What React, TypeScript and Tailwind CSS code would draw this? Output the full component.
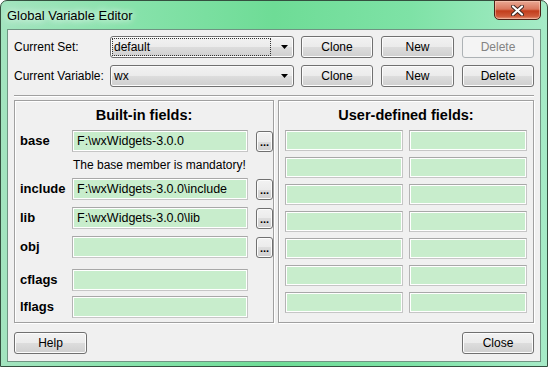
import React from 'react'

const btnFace =
  'bg-[linear-gradient(#f2f2f2,#ebebeb_50%,#dddddd_50%,#cfcfcf)] border border-[#707070] rounded-[3px] shadow-[inset_0_0_0_1px_#fcfcfc]'

function Button({ label, w, disabled }: { label: string; w: string; disabled?: boolean }) {
  return (
    <div
      className={`${w} h-[22px] flex items-center justify-center text-[12px] ${
        disabled
          ? 'bg-[#f4f4f4] border border-[#adb2b5] rounded-[3px] text-[#838383]'
          : `${btnFace} text-black`
      }`}
    >
      {label}
    </div>
  )
}

function Combo({ value, focused }: { value: string; focused?: boolean }) {
  return (
    <div className={`w-[184px] h-[22px] ${btnFace} flex items-center pl-[2px] pr-[5px]`}>
      <div
        className={`flex-1 h-[16px] flex items-center pl-[1px] text-[12px] text-black ${
          focused ? 'outline outline-1 outline-dotted outline-[#333]' : ''
        }`}
      >
        {value}
      </div>
      <svg width="7" height="4" viewBox="0 0 7 4" className="ml-[11px]">
        <path d="M0 0h7L3.5 4z" fill="#000" />
      </svg>
    </div>
  )
}

function Field({ w, value }: { w: string; value?: string }) {
  return (
    <div
      className={`${w} h-[22px] border border-[#c6c6c6] border-t-[#a8a8a8] border-l-[#b4b4b4] bg-[#c8edcc] shadow-[inset_0_0_0_1px_#ffffff] flex items-center pl-[4px] text-[12.5px] text-black whitespace-nowrap overflow-hidden`}
    >
      {value}
    </div>
  )
}

function Ellipsis() {
  return (
    <div className={`w-[17px] h-[21px] ${btnFace} flex items-end justify-center pb-[3px] text-[11px] font-bold leading-none`}>
      ...
    </div>
  )
}

const groupBox =
  'h-[223px] border border-[#a0a0a0] shadow-[inset_1px_1px_0_#ffffff,1px_1px_0_#ffffff] flex flex-col'

function BuiltinRow({ label, value, mt, browse }: { label: string; value?: string; mt: string; browse?: boolean }) {
  return (
    <div className={`flex items-center h-[22px] ${mt}`}>
      <div className="w-[57px] pl-[5px] text-[13px] font-bold text-black">{label}</div>
      <Field w="w-[176px]" value={value} />
      {browse && (
        <div className="ml-[8px]">
          <Ellipsis />
        </div>
      )}
    </div>
  )
}

export default function App() {
  return (
    <div className="w-[548px] h-[367px] overflow-hidden font-['Liberation_Sans',Arial,sans-serif] bg-white">
      <div className="w-full h-full border border-[#34503f] rounded-t-[7px] bg-[linear-gradient(90deg,#a3e4bf,#86e2aa_25%,#6edc96_50%,#7ee2a6_75%,#a6ebc7)] flex flex-col">
        {/* Title bar */}
        <div className="h-[28px] flex items-start">
          <div className="pl-[6px] pt-[5px] text-[13px] text-black [text-shadow:0_0_6px_#e8fff0,0_0_10px_#e8fff0]">
            Global Variable Editor
          </div>
          <div className="flex-1" />
          <div className="-mt-px mr-[6px] w-[47px] h-[20px] rounded-b-[5px] border border-[#4b2117] bg-[linear-gradient(#e9a894,#d9785e_45%,#c23d1c_55%,#cf5a3a_85%,#e69a7f)] shadow-[inset_0_0_0_1px_rgba(255,220,200,0.45)] flex items-center justify-center">
            <svg width="13" height="11" viewBox="0 0 13 11">
              <path d="M2 1.5l9 8M11 1.5l-9 8" stroke="#3a2420" strokeWidth="4" strokeLinecap="round" />
              <path d="M2 1.5l9 8M11 1.5l-9 8" stroke="#ffffff" strokeWidth="2.2" strokeLinecap="round" />
            </svg>
          </div>
        </div>

        {/* Client area */}
        <div className="mx-[6px] h-[333px] border border-[#6f9482] bg-[#f0f0f0] flex flex-col px-[6px] pt-[6px] text-[12px] text-black">
          <div className="flex items-center h-[22px]">
            <div className="w-[96px]">Current Set:</div>
            <Combo value="default" focused />
            <div className="ml-[7px]"><Button label="Clone" w="w-[72px]" /></div>
            <div className="ml-[8px]"><Button label="New" w="w-[73px]" /></div>
            <div className="ml-[8px]"><Button label="Delete" w="w-[72px]" disabled /></div>
          </div>
          <div className="flex items-center h-[22px] mt-[7px]">
            <div className="w-[96px]">Current Variable:</div>
            <Combo value="wx" />
            <div className="ml-[7px]"><Button label="Clone" w="w-[72px]" /></div>
            <div className="ml-[8px]"><Button label="New" w="w-[73px]" /></div>
            <div className="ml-[8px]"><Button label="Delete" w="w-[72px]" /></div>
          </div>

          <div className="mt-[8px] h-[2px] border-t border-[#a0a0a0] bg-white" />

          <div className="mt-[3px] flex gap-[4px]">
            {/* Built-in fields */}
            <div className={`${groupBox} w-[260px]`}>
              <div className="h-[29px] flex items-center justify-center text-[14.5px] font-bold pt-[1px]">
                Built-in fields:
              </div>
              <BuiltinRow label="base" value="F:\wxWidgets-3.0.0" mt="" browse />
              <div className="h-[26px] flex items-center pl-[58px] text-[12px]">The base member is mandatory!</div>
              <BuiltinRow label="include" value="F:\wxWidgets-3.0.0\include" mt="" browse />
              <BuiltinRow label="lib" value="F:\wxWidgets-3.0.0\lib" mt="mt-[7px]" browse />
              <BuiltinRow label="obj" mt="mt-[7px]" browse />
              <BuiltinRow label="cflags" mt="mt-[11px]" />
              <BuiltinRow label="lflags" mt="mt-[5px]" />
            </div>

            {/* User-defined fields */}
            <div className={`${groupBox} w-[256px]`}>
              <div className="h-[29px] flex items-center justify-center text-[14.5px] font-bold pt-[1px]">
                User-defined fields:
              </div>
              <div className="grid grid-cols-2 gap-x-[6px] gap-y-[6px] px-[6px]">
                {Array.from({ length: 14 }).map((_, i) => (
                  <div key={i} className="h-[21px] border border-[#c6c6c6] border-t-[#a8a8a8] border-l-[#b4b4b4] bg-[#c8edcc] shadow-[inset_0_0_0_1px_#ffffff]" />
                ))}
              </div>
            </div>
          </div>

          <div className="mt-[9px] flex justify-between">
            <Button label="Help" w="w-[73px]" />
            <Button label="Close" w="w-[72px]" />
          </div>
        </div>
      </div>
    </div>
  )
}
